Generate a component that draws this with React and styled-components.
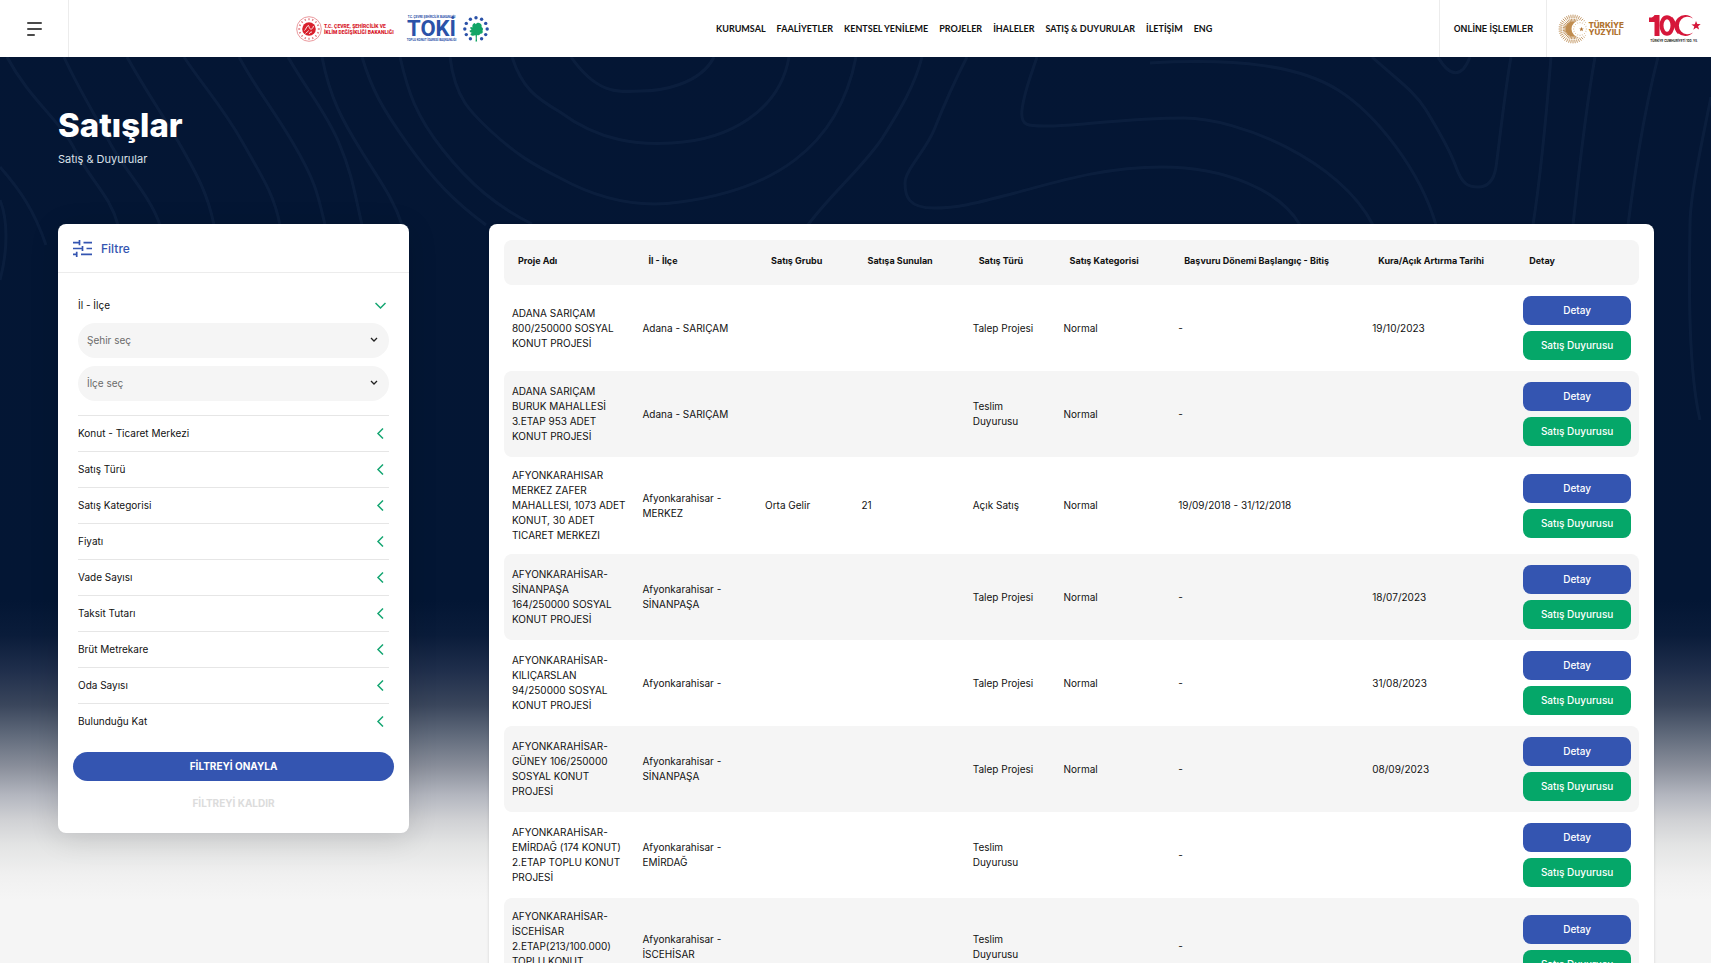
import React from "react";
import styled, { createGlobalStyle } from "styled-components";

const GlobalStyle = createGlobalStyle`
  *, *::before, *::after { box-sizing: border-box; }
  html { scrollbar-width: none; }
  body {
    margin: 0;
    background: #f5f5f5;
    color: #111;
    font-family: Inter, "Liberation Sans", sans-serif;
    font-size: 10px;
    line-height: 15px;
  }
  button, select { font: inherit; color: inherit; }
`;

const Page = styled.div`
  position: relative;
  min-height: 100vh;
  overflow: hidden;
`;

/* ---------- header ---------- */

const Header = styled.header`
  position: relative;
  z-index: 1;
  display: flex;
  align-items: stretch;
  height: 57px;
  background: #fff;
`;

const MenuButton = styled.button`
  display: flex;
  flex-direction: column;
  justify-content: center;
  gap: 4px;
  width: 69px;
  padding: 0 0 0 27px;
  border: 0;
  border-right: 1px solid #ececec;
  background: none;
`;

const MenuLine = styled.span`
  width: ${(p) => (p.$short ? 8 : 15)}px;
  height: 2px;
  border-radius: 1px;
  background: #4a4a4a;
`;

const HeaderMain = styled.div`
  flex: 1;
  display: flex;
  align-items: center;
  justify-content: space-evenly;
`;

const Brands = styled.div`
  display: flex;
  align-items: center;
  gap: 14px;
`;

const BrandLink = styled.a`
  display: flex;
  align-items: center;
  gap: ${(p) => p.$gap || 0}px;
  text-decoration: none;
`;

const MinistryName = styled.span`
  width: 69px;
  color: #d8202c;
  font-family: Roboto, sans-serif;
  font-size: 5px;
  font-weight: 900;
  line-height: 6px;
  white-space: nowrap;
`;

const TokiWord = styled.span`
  display: flex;
  flex-direction: column;
  align-items: center;
  width: 49px;
  color: #2b52a8;
  font-family: Roboto, sans-serif;
  font-size: 22px;
  font-weight: 700;
  line-height: 20px;
`;

const TokiCaption = styled.span`
  font-size: 3px;
  line-height: 3px;
  white-space: nowrap;
`;

const Nav = styled.nav`
  display: flex;
  gap: 11px;
`;

const NavLink = styled.a`
  color: #111;
  font-family: Lato, sans-serif;
  font-size: 9px;
  font-weight: 700;
  white-space: nowrap;
  text-decoration: none;
`;

const OnlineLink = styled(NavLink)`
  display: flex;
  align-items: center;
  justify-content: center;
  width: 108px;
  border: solid #ececec;
  border-width: 0 1px;
  font-family: Inter, sans-serif;
  font-weight: 600;
`;

const Emblems = styled.div`
  display: flex;
  align-items: center;
  gap: 24px;
  padding: 0 10px 0 11px;
`;

const CenturyName = styled.span`
  color: #b0722f;
  font-size: 8px;
  font-weight: 800;
  line-height: 7px;
`;

/* ---------- hero ---------- */

const Backdrop = styled.div`
  position: absolute;
  inset: 0;
  background: linear-gradient(
    #041634 0, #031634 600px, #0a1c3a 635px, #1f2e4b 670px, #3a465c 705px,
    #606a7b 735px, #8a8f9b 767px, #b3b6bf 795px, #d0d1d4 820px,
    #e3e4e4 845px, #f0f0f0 875px, #f5f5f5 900px
  );
`;

const Contours = styled.svg`
  display: block;
  width: 100%;
  min-width: 1711px;
  fill: none;
  stroke: #8fb0d8;
  stroke-width: 3;
  stroke-opacity: 0.06;
`;

const Hero = styled.section`
  position: relative;
  padding: 48px 57px 0 58px;
  height: 167px;
  color: #fff;
`;

const Title = styled.h1`
  margin: 0;
  font-size: 33px;
  font-weight: 800;
  line-height: 40px;
`;

const Subtitle = styled.p`
  margin: 5px 0 0;
  color: #dbe1ea;
  font-size: 11px;
  line-height: 18px;
`;

/* ---------- page body ---------- */

const Content = styled.main`
  position: relative;
  display: grid;
  grid-template-columns: 22% 1fr;
  gap: 5%;
  align-items: start;
  padding: 0 57px 40px 58px;
`;

const Panel = styled.section`
  border-radius: 8px;
  background: #fff;
  box-shadow: 0 5px 30px rgba(0, 0, 0, 0.12);
`;

const FilterHead = styled.h2`
  display: flex;
  align-items: center;
  gap: 9px;
  height: 49px;
  margin: 0;
  padding: 0 15px;
  border-bottom: 1px solid #ececec;
  color: #3455b1;
  font-size: 12px;
  font-weight: 500;
`;

const FilterBody = styled.form`
  padding: 15px;
`;

const FilterList = styled.div`
  padding: 0 5px;
`;

const FilterGroup = styled.div`
  & + & { border-top: 1px solid #e6e6e6; }
`;

const FilterToggle = styled.button`
  display: flex;
  align-items: center;
  justify-content: space-between;
  width: 100%;
  height: 35px;
  padding: 0 3px 0 0;
  border: 0;
  background: none;
  text-align: left;
`;

const Fields = styled.div`
  display: grid;
  gap: 8px;
  padding-bottom: 14px;
`;

const SelectBox = styled.div`
  position: relative;
  display: grid;
`;

const Select = styled.select`
  height: 35px;
  padding: 0 9px;
  border: 0;
  border-radius: 18px;
  background: #f5f5f5;
  color: #6b6b6b;
  appearance: none;
`;

const SelectArrow = styled.svg`
  position: absolute;
  top: 14px;
  right: 11px;
  pointer-events: none;
`;

const SubmitButton = styled.button`
  display: block;
  width: 100%;
  height: 29px;
  margin-top: 13px;
  border: 0;
  border-radius: 15px;
  background: #3455b1;
  color: #fff;
  font-weight: 700;
`;

const ResetButton = styled(SubmitButton)`
  margin-top: 8px;
  background: none;
  color: #dcdcdc;
`;

/* ---------- table ---------- */

const TablePanel = styled(Panel)`
  padding: 16px 15px;
  box-shadow: 0 0 3px rgba(0, 0, 0, 0.15);
`;

const Table = styled.table`
  width: 100%;
  table-layout: fixed;
  border-collapse: separate;
  border-spacing: 0;
`;

const Col = styled.col`
  width: ${(p) => p.$share}%;
`;

const HeadCell = styled.th`
  height: 45px;
  padding: 0 0 4px 14px;
  background: #f5f5f5;
  font-size: 9px;
  font-weight: 700;
  text-align: left;
  white-space: nowrap;
  &:first-child { border-radius: 8px 0 0 8px; }
  &:last-child { border-radius: 0 8px 8px 0; }
`;

const Row = styled.tr`
  &:nth-child(even) { background: #f5f5f5; }
`;

const Cell = styled.td`
  padding: 11px 8px;
  vertical-align: middle;
  &:first-child { border-radius: 8px 0 0 8px; }
  &:last-child { border-radius: 0 8px 8px 0; }
`;

const KindCell = styled(Cell)`
  padding-right: 20px;
  white-space: ${(p) => (p.$wrap ? "normal" : "nowrap")};
`;

const Actions = styled.div`
  display: grid;
  gap: 6px;
`;

const ActionButton = styled.button`
  height: 29px;
  padding: 0;
  border: 0;
  border-radius: 8px;
  background: ${(p) => (p.$green ? "#05a769" : "#3455b1")};
  color: #fff;
  font-weight: 500;
`;

/* ---------- drawings ---------- */

const rays = (n, cx, cy, r1, r2) =>
  Array.from({ length: n }, (_, i) => {
    const a = (i * 2 * Math.PI) / n;
    return `M${cx + r1 * Math.cos(a)} ${cy + r1 * Math.sin(a)}L${cx + r2 * Math.cos(a)} ${cy + r2 * Math.sin(a)}`;
  }).join("");

function MinistrySeal() {
  return (
    <svg width="26" height="26" viewBox="0 0 26 26" aria-hidden="true">
      <circle cx="13" cy="13" r="12.3" fill="none" stroke="#e58085" strokeWidth=".8" />
      <path d={rays(16, 13, 13, 8.8, 10.8)} stroke="#e27a80" strokeWidth="1.300" />
      <circle cx="13" cy="13" r="6.8" fill="#d8202c" />
      <path d="M8.500 14.500c1.500-1 2-4.500 4-5 1 1.500.5 3 2 3.500s2.500-1 3-3M9.500 17.500c1-1.500 2-1 3-3M13.500 18c0-1.500 1-2 2.500-2" fill="none" stroke="#fff" strokeWidth=".9" />
    </svg>
  );
}

function TokiTree() {
  const dots = Array.from({ length: 12 }, (_, i) => {
    const a = (i * 2 * Math.PI) / 12;
    return i === 6 ? null : (
      <circle key={i} cx={13 + 11.2 * Math.sin(a)} cy={13 - 11.2 * Math.cos(a)} r="1.7" fill="#2b52a8" />
    );
  });
  return (
    <svg width="26" height="26" viewBox="0 0 26 26" aria-hidden="true">
      {dots}
      <path d="M12.500 25.500c.4-3 .3-4.500-.1-6.500-1.600 1.200-4 1-5-.6.300-.9 1.300-1.300 2.300-1.300-1.800-.2-3-1-3.200-2.300.6-.7 1.300-.9 2.200-.8-1.200-.7-1.600-1.700-1.200-2.900.8-.2 1.400 0 2 .4-.6-2 .3-3.800 2-4.400.6.300.9.700 1.100 1.200.9-1.600 3.200-2.100 4.700-.9 1.400 1 1.700 2.500 1.200 3.700 1.500.6 2 2.400 1 3.600 1 1.600-.3 3.300-2.200 3-.9 1.500-2.200 1.700-3.300 1.300-.3 2.200-.2 4.300.1 6.500z" fill="#12a566" />
    </svg>
  );
}

function CenturySun() {
  return (
    <svg width="30" height="30" viewBox="0 0 30 30" aria-hidden="true">
      <path d={rays(40, 15, 15, 7, 14.6)} stroke="#bd8f58" strokeWidth=".9" strokeDasharray="3.400 .6" />
      <circle cx="15" cy="15" r="7.5" fill="#c08d50" />
      <circle cx="22" cy="15" r="8.500" fill="#fff" />
      <path d={rays(16, 22, 15, 5.8, 7)} stroke="#d1b084" strokeWidth=".8" />
      <path d="M23.500 12.800l.6 1.600 1.700.1-1.300 1 .4 1.700-1.400-1-1.400 1 .4-1.700-1.300-1 1.700-.1z" fill="#b0722f" />
    </svg>
  );
}

function CentenaryMark() {
  return (
    <svg width="53" height="30" viewBox="0 0 53 30" role="img" aria-label="100">
      <path d="M1 3.500c3 .4 4.800-.7 5.500-2.500h5v21H6.500V8H1z" fill="#d6173a" />
      <ellipse cx="19" cy="11.500" rx="5.500" ry="8.300" fill="none" stroke="#d6173a" strokeWidth="4" />
      <path d="M45 4.500A10.500 10.500 0 1 0 45 18.500A8.800 8.800 0 1 1 45 4.500z" fill="#d6173a" />
      <path d="M23 4c4 3 4 11 8 15" fill="none" stroke="#d6173a" strokeWidth="3" />
      <path d="M48 7l1.300 3 3.400.1-2.600 2.100 1 3.400-3-1.900-2.800 2.100 1-3.400-2.900-2 3.400-.2z" fill="#d6173a" />
      <text x="26" y="28" textAnchor="middle" fontSize="3" fontWeight="700" fill="#222">TÜRKİYE CUMHURİYETİ 100. YIL</text>
    </svg>
  );
}

function FilterIcon() {
  return (
    <svg width="19" height="17" viewBox="0 0 19 17" fill="none" stroke="#3455b1" strokeWidth="1.700" aria-hidden="true">
      <path d="M0 2.700h6.500M6.500 0v5.300M10.500 2.700H19M0 8.500h9M9.500 6v5M13.500 8.500H19M0 14.300h3.500M3.700 11.700v5.300M8 14.300h11" />
    </svg>
  );
}

function Chevron({ open }) {
  return (
    <svg width="11" height="11" viewBox="0 0 11 11" fill="none" stroke="#15a672" strokeWidth="1.500" aria-hidden="true">
      <path d={open ? "M.5 3l5 5 5-5" : "M8 .5L3 5.500l5 5"} />
    </svg>
  );
}

const contourPaths = [
  "M127 57C150 98 160 110 179 143S208 195 214 225",
  "M184 57C206 90 222 106 243 143S274 195 280 225",
  "M239 57C258 92 270 104 293 143S318 195 325 225",
  "M288 57C308 92 326 112 339 143S354 190 362 225",
  "M322 57C330 98 342 120 362 152S394 200 402 225",
  "M362 57C372 90 382 108 407 143S452 200 486 225",
  "M400 57C408 92 416 116 443 150S496 206 532 224",
  "M450 57C455 98 470 112 493 133S532 164 560 178C600 200 640 208 680 202C770 190 838 150 856 57",
  "M512 57C522 88 536 98 560 112C600 142 640 145 672 143C730 140 780 110 789 57",
  "M571 57C600 98 622 91 641 91S700 85 714 57",
  "M922 57C915 85 900 110 883 137S830 195 808 225",
  "M967 57C950 90 942 110 934 130S905 170 905 183S908 208 934 208S980 202 1015 193S1100 167 1162 167S1280 190 1300 225",
  "M1037 57C1030 78 1024 92 1022 110S1030 126 1052 126S1130 118 1184 118S1340 160 1373 225",
  "M1150 63C1240 58 1300 66 1338 90S1420 170 1436 225",
  "M1372 57C1400 82 1415 92 1426 110S1450 150 1456 167S1468 187 1478 187S1494 180 1496 167S1505 90 1511 57",
  "M1438 57C1450 78 1462 78 1470 57",
  "M1551 57C1546 120 1540 180 1533 225",
  "M1595 57C1584 120 1578 180 1573 225",
  "M1658 57C1642 120 1634 180 1628 225",
  "M1711 97C1698 160 1690 200 1690 225S1686 360 1700 420",
  "M7 57C30 100 60 120 75 150S110 195 118 225",
  "M64 57C80 92 96 116 110 143S150 195 160 225",
  "M0 167C20 190 34 210 46 245",
  "M0 200C8 220 8 250 0 280",
];

/* ---------- data ---------- */

const navItems = ["KURUMSAL", "FAALİYETLER", "KENTSEL YENİLEME", "PROJELER", "İHALELER", "SATIŞ & DUYURULAR", "İLETİŞİM", "ENG"];

const filters = ["Konut - Ticaret Merkezi", "Satış Türü", "Satış Kategorisi", "Fiyatı", "Vade Sayısı", "Taksit Tutarı", "Brüt Metrekare", "Oda Sayısı", "Bulunduğu Kat"];

const columns = [
  ["Proje Adı", 11.5],
  ["İl - İlçe", 10.8],
  ["Satış Grubu", 8.5],
  ["Satışa Sunulan", 9.8],
  ["Satış Türü", 8],
  ["Satış Kategorisi", 10.1],
  ["Başvuru Dönemi Başlangıç - Bitiş", 17.1],
  ["Kura/Açık Artırma Tarihi", 13.3],
  ["Detay", 10.9],
];

const sales = [
  { name: "ADANA SARIÇAM 800/250000 SOSYAL KONUT PROJESİ", place: "Adana - SARIÇAM", kind: "Talep Projesi", category: "Normal", period: "-", draw: "19/10/2023" },
  { name: "ADANA SARIÇAM BURUK MAHALLESİ 3.ETAP 953 ADET KONUT PROJESİ", place: "Adana - SARIÇAM", kind: "Teslim Duyurusu", category: "Normal", period: "-" },
  { name: "AFYONKARAHISAR MERKEZ ZAFER MAHALLESI, 1073 ADET KONUT, 30 ADET TICARET MERKEZI", place: "Afyonkarahisar - MERKEZ", group: "Orta Gelir", offered: "21", kind: "Açık Satış", category: "Normal", period: "19/09/2018 - 31/12/2018" },
  { name: "AFYONKARAHİSAR-SİNANPAŞA 164/250000 SOSYAL KONUT PROJESİ", place: "Afyonkarahisar - SİNANPAŞA", kind: "Talep Projesi", category: "Normal", period: "-", draw: "18/07/2023" },
  { name: "AFYONKARAHİSAR-KILIÇARSLAN 94/250000 SOSYAL KONUT PROJESİ", place: "Afyonkarahisar -", kind: "Talep Projesi", category: "Normal", period: "-", draw: "31/08/2023" },
  { name: "AFYONKARAHİSAR-GÜNEY 106/250000 SOSYAL KONUT PROJESİ", place: "Afyonkarahisar - SİNANPAŞA", kind: "Talep Projesi", category: "Normal", period: "-", draw: "08/09/2023" },
  { name: "AFYONKARAHİSAR-EMİRDAĞ (174 KONUT) 2.ETAP TOPLU KONUT PROJESİ", place: "Afyonkarahisar - EMİRDAĞ", kind: "Teslim Duyurusu", period: "-" },
  { name: "AFYONKARAHİSAR-İSCEHİSAR 2.ETAP(213/100.000) TOPLU KONUT PROJESİ", place: "Afyonkarahisar - İSCEHİSAR", kind: "Teslim Duyurusu", period: "-" },
];

/* ---------- sections ---------- */

function SelectField({ label }) {
  return (
    <SelectBox>
      <Select aria-label={label} defaultValue="">
        <option value="">{label}</option>
      </Select>
      <SelectArrow width="8" height="6" viewBox="0 0 8 6" fill="none" stroke="#222" strokeWidth="1.300" aria-hidden="true">
        <path d="M1 1l3 3 3-3" />
      </SelectArrow>
    </SelectBox>
  );
}

function SiteHeader() {
  return (
    <Header>
      <MenuButton aria-label="Menü">
        <MenuLine />
        <MenuLine />
        <MenuLine $short />
      </MenuButton>
      <HeaderMain>
        <Brands>
          <BrandLink href="#" $gap={2}>
            <MinistrySeal />
            <MinistryName>
              T.C. ÇEVRE, ŞEHİRCİLİK VE
              <br />
              İKLİM DEĞİŞİKLİĞİ BAKANLIĞI
            </MinistryName>
          </BrandLink>
          <BrandLink href="#" $gap={7}>
            <TokiWord>
              <TokiCaption>T.C. ÇEVRE ŞEHİRCİLİK BAKANLIĞI</TokiCaption>
              TOKİ
              <TokiCaption>TOPLU KONUT İDARESİ BAŞKANLIĞI</TokiCaption>
            </TokiWord>
            <TokiTree />
          </BrandLink>
        </Brands>
        <Nav>
          {navItems.map((item) => (
            <NavLink href="#" key={item}>{item}</NavLink>
          ))}
        </Nav>
      </HeaderMain>
      <OnlineLink href="#">ONLİNE İŞLEMLER</OnlineLink>
      <Emblems>
        <BrandLink href="#">
          <CenturySun />
          <CenturyName>
            TÜRKİYE
            <br />
            YÜZYILI
          </CenturyName>
        </BrandLink>
        <CentenaryMark />
      </Emblems>
    </Header>
  );
}

function FilterPanel() {
  return (
    <Panel>
      <FilterHead>
        <FilterIcon />
        Filtre
      </FilterHead>
      <FilterBody onSubmit={(e) => e.preventDefault()}>
        <FilterList>
          <FilterGroup>
            <FilterToggle type="button" aria-expanded="true">
              İl - İlçe
              <Chevron open />
            </FilterToggle>
            <Fields>
              <SelectField label="Şehir seç" />
              <SelectField label="İlçe seç" />
            </Fields>
          </FilterGroup>
          {filters.map((name) => (
            <FilterGroup key={name}>
              <FilterToggle type="button" aria-expanded="false">
                {name}
                <Chevron />
              </FilterToggle>
            </FilterGroup>
          ))}
        </FilterList>
        <SubmitButton>FİLTREYİ ONAYLA</SubmitButton>
        <ResetButton type="reset">FİLTREYİ KALDIR</ResetButton>
      </FilterBody>
    </Panel>
  );
}

function SalesTable() {
  return (
    <TablePanel>
      <Table>
        <colgroup>
          {columns.map(([name, share]) => (
            <Col key={name} $share={share} />
          ))}
        </colgroup>
        <thead>
          <tr>
            {columns.map(([name]) => (
              <HeadCell key={name} scope="col">{name}</HeadCell>
            ))}
          </tr>
        </thead>
        <tbody>
          {sales.map((s) => (
            <Row key={s.name}>
              <Cell>{s.name}</Cell>
              <Cell>{s.place}</Cell>
              <Cell>{s.group}</Cell>
              <Cell>{s.offered}</Cell>
              <KindCell $wrap={s.kind.startsWith("Teslim")}>{s.kind}</KindCell>
              <Cell>{s.category}</Cell>
              <Cell>{s.period}</Cell>
              <Cell>{s.draw}</Cell>
              <Cell>
                <Actions>
                  <ActionButton type="button">Detay</ActionButton>
                  <ActionButton type="button" $green>Satış Duyurusu</ActionButton>
                </Actions>
              </Cell>
            </Row>
          ))}
        </tbody>
      </Table>
    </TablePanel>
  );
}

export default function App() {
  return (
    <Page>
      <GlobalStyle />
      <Backdrop>
        <Contours viewBox="0 0 1711 600" aria-hidden="true">
          {contourPaths.map((d) => (
            <path d={d} key={d} />
          ))}
        </Contours>
      </Backdrop>
      <SiteHeader />
      <Hero>
        <Title>Satışlar</Title>
        <Subtitle>Satış &amp; Duyurular</Subtitle>
      </Hero>
      <Content>
        <FilterPanel />
        <SalesTable />
      </Content>
    </Page>
  );
}
